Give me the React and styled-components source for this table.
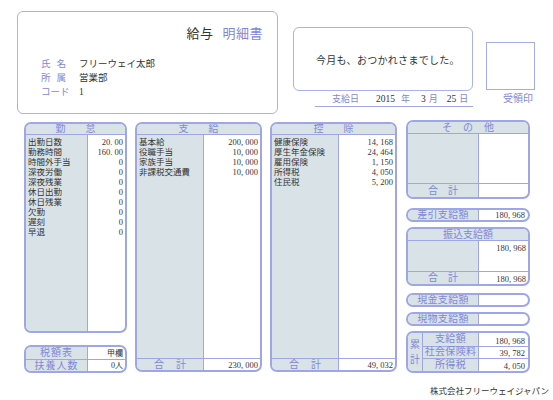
import styled, { createGlobalStyle } from "styled-components";

const line = "#9ea6e6";
const shade = "#d8e2e7";
const blue = "#7f87d8";
const ink = "#333333";
const num = "#3d3333";

const GlobalStyle = createGlobalStyle`
  html, body {
    margin: 0;
    padding: 0;
    background: #ffffff;
  }
  body {
    font-family: "Liberation Serif", "Noto Sans CJK JP", serif;
    color: ${ink};
  }
`;

const Page = styled.div`
  width: 553px;
  height: 400px;
  overflow: hidden;
  box-sizing: border-box;
`;

const Top = styled.div`
  display: flex;
  align-items: flex-start;
  height: 114px;
  padding: 11px 0 0 17px;
  box-sizing: border-box;
`;

const HeadCard = styled.div`
  width: 261px;
  height: 103px;
  box-sizing: border-box;
  border: 1px solid #aab1ec;
  border-radius: 6px;
  padding: 14px 14px 0 23px;
  display: flex;
  flex-direction: column;
`;

const Title = styled.div`
  align-self: flex-end;
  font-size: 13px;
  line-height: 16px;
  letter-spacing: 0.5px;
`;

const TitleDark = styled.span`
  color: ${ink};
  margin-right: 9px;
`;

const TitleBlue = styled.span`
  color: ${blue};
`;

const InfoList = styled.div`
  margin-top: 15px;
  display: flex;
  flex-direction: column;
`;

const InfoRow = styled.div`
  display: flex;
  font-size: 9.5px;
  line-height: 14px;
`;

const InfoLabel = styled.span`
  width: 38px;
  color: ${blue};
  letter-spacing: ${(p) => p.$spread || 0}px;
`;

const InfoValue = styled.span`
  color: ${ink};
`;

const MessageCol = styled.div`
  margin-left: 15px;
  margin-top: 16px;
  display: flex;
  flex-direction: column;
`;

const MessageBox = styled.div`
  width: 180px;
  height: 64px;
  box-sizing: border-box;
  border: 1px solid #aab1ec;
  border-radius: 6px;
  display: flex;
  align-items: center;
  padding-left: 22px;
  font-size: 10px;
  letter-spacing: 0.3px;
  color: ${ink};
`;

const DateRow = styled.div`
  margin-left: 22px;
  width: 158px;
  height: 16px;
  box-sizing: border-box;
  border-bottom: 1px solid ${line};
  display: flex;
  align-items: center;
  padding-left: 17px;
  font-size: 9px;
  line-height: 12px;
  white-space: nowrap;
`;

const DateLabel = styled.span`
  flex: none;
  color: ${blue};
  margin-right: ${(p) => p.$gap || 0}px;
`;

const DateNum = styled.span`
  flex: none;
  color: ${ink};
  font-size: 9.5px;
  margin-right: ${(p) => p.$gap || 0}px;
`;

const StampCol = styled.div`
  margin-left: 13px;
  margin-top: 31px;
  display: flex;
  flex-direction: column;
  align-items: flex-end;
`;

const Stamp = styled.div`
  width: 49px;
  height: 48px;
  box-sizing: border-box;
  border: 1px solid #a4acea;
`;

const StampLabel = styled.div`
  margin-top: 2px;
  margin-right: 2px;
  font-size: 10px;
  line-height: 14px;
  color: ${blue};
`;

const Main = styled.div`
  display: flex;
  align-items: flex-start;
  gap: 8px;
  padding-left: 24px;
  margin-top: 6px;
`;

const Column = styled.div`
  width: ${(p) => p.$w}px;
  margin-top: ${(p) => p.$top || 0}px;
  margin-left: ${(p) => p.$left || 0}px;
  display: flex;
  flex-direction: column;
`;

const Panel = styled.div`
  width: ${(p) => p.$w}px;
  height: ${(p) => p.$h}px;
  margin-top: ${(p) => p.$top || 0}px;
  box-sizing: border-box;
  border: 2px solid ${line};
  border-radius: 7px;
  overflow: hidden;
  display: flex;
  flex-direction: column;
  background: #ffffff;
`;

const PanelHead = styled.div`
  height: ${(p) => p.$h || 11}px;
  flex: none;
  box-sizing: border-box;
  background: ${shade};
  border-bottom: 1px solid ${line};
  display: flex;
  justify-content: center;
  align-items: center;
  gap: ${(p) => p.$gap}px;
  color: ${blue};
  font-size: 10px;
  line-height: 10px;
`;

const Body = styled.div`
  flex: 1;
  display: grid;
  grid-template-columns: ${(p) => p.$left}px 1fr;
  min-height: 0;
`;

const LabelCol = styled.div`
  background: ${shade};
  border-right: 1px solid ${line};
  padding: 2px 0 0 2px;
  font-size: 8.5px;
  line-height: 10px;
  color: ${ink};
  white-space: nowrap;
`;

const ValueCol = styled.div`
  padding: 2px 2px 0 0;
  text-align: right;
  font-size: 8.5px;
  line-height: 10px;
  color: ${num};
`;

const Foot = styled.div`
  height: ${(p) => p.$h || 12}px;
  flex: none;
  box-sizing: border-box;
  border-top: 1px solid ${line};
  display: grid;
  grid-template-columns: ${(p) => p.$left}px 1fr;
`;

const FootLabel = styled.div`
  background: ${shade};
  border-right: 1px solid ${line};
  display: flex;
  justify-content: center;
  align-items: center;
  gap: ${(p) => p.$gap || 12}px;
  color: ${blue};
  font-size: 10px;
  line-height: 10px;
`;

const FootValue = styled.div`
  display: flex;
  justify-content: flex-end;
  align-items: flex-end;
  padding: 0 2px 0 0;
  font-size: 8.5px;
  line-height: 10px;
  color: ${num};
`;

const Pill = styled.div`
  height: ${(p) => p.$h || 14}px;
  margin-top: ${(p) => p.$top || 0}px;
  box-sizing: border-box;
  border: 2px solid ${line};
  border-radius: 7px;
  overflow: hidden;
  display: grid;
  grid-template-columns: 71px 1fr;
`;

const PillLabel = styled.div`
  background: ${shade};
  border-right: 1px solid ${line};
  display: flex;
  justify-content: center;
  align-items: center;
  color: ${blue};
  font-size: 10px;
  line-height: 10px;
  letter-spacing: 0.3px;
`;

const PillValue = styled.div`
  display: flex;
  justify-content: flex-end;
  align-items: flex-end;
  padding-right: 3px;
  font-size: 8.5px;
  line-height: 9px;
  color: ${num};
`;

const TaxBox = styled.div`
  margin-top: 12px;
  height: 28px;
  box-sizing: border-box;
  border: 2px solid ${line};
  border-radius: 7px;
  overflow: hidden;
  display: grid;
  grid-template-columns: 62px 1fr;
  grid-template-rows: 1fr 1fr;
`;

const TaxLabel = styled.div`
  background: ${shade};
  border-right: 1px solid ${line};
  border-top: ${(p) => (p.$first ? "none" : `1px solid ${line}`)};
  display: flex;
  justify-content: center;
  align-items: center;
  color: ${blue};
  font-size: 10px;
  line-height: 10px;
  letter-spacing: 1px;
`;

const TaxValue = styled.div`
  border-top: ${(p) => (p.$first ? "none" : `1px solid ${line}`)};
  display: flex;
  justify-content: flex-end;
  align-items: center;
  padding-right: 2px;
  font-size: 8px;
  line-height: 9px;
  color: ${ink};
`;

const Ruikei = styled.div`
  margin-top: 5px;
  height: 42px;
  box-sizing: border-box;
  border: 2px solid ${line};
  border-radius: 7px;
  overflow: hidden;
  display: grid;
  grid-template-columns: 15px 56px 1fr;
  grid-template-rows: 1fr 1fr 1fr;
`;

const RuikeiSide = styled.div`
  grid-row: 1 / 4;
  background: ${shade};
  border-right: 1px solid ${line};
  display: flex;
  flex-direction: column;
  justify-content: center;
  align-items: center;
  color: ${blue};
  font-size: 10px;
  line-height: 15px;
`;

const RuikeiLabel = styled.div`
  background: ${shade};
  border-right: 1px solid ${line};
  border-top: ${(p) => (p.$first ? "none" : `1px solid ${line}`)};
  display: flex;
  justify-content: center;
  align-items: center;
  color: ${blue};
  font-size: 10px;
  line-height: 10px;
  letter-spacing: 0.3px;
`;

const RuikeiValue = styled.div`
  border-top: ${(p) => (p.$first ? "none" : `1px solid ${line}`)};
  display: flex;
  justify-content: flex-end;
  align-items: flex-end;
  padding-right: 3px;
  font-size: 8.5px;
  line-height: 10px;
  color: ${num};
`;

const Company = styled.div`
  margin-top: 12px;
  padding-right: 4px;
  text-align: right;
  font-size: 8.5px;
  line-height: 12px;
  color: ${ink};
`;

const Spread = ({ text }) => text.split("").map((c, i) => <span key={i}>{c}</span>);

const attendance = [
  ["出勤日数", "20. 00"],
  ["勤務時間", "160. 00"],
  ["時間外手当", "0"],
  ["深夜労働", "0"],
  ["深夜残業", "0"],
  ["休日出勤", "0"],
  ["休日残業", "0"],
  ["欠勤", "0"],
  ["遅刻", "0"],
  ["早退", "0"],
];

const payments = [
  ["基本給", "200, 000"],
  ["役職手当", "10, 000"],
  ["家族手当", "10, 000"],
  ["非課税交通費", "10, 000"],
];

const deductions = [
  ["健康保険", "14, 168"],
  ["厚生年金保険", "24, 464"],
  ["雇用保険", "1, 150"],
  ["所得税", "4, 050"],
  ["住民税", "5, 200"],
];

const ruikei = [
  ["支給額", "180, 968"],
  ["社会保険料", "39, 782"],
  ["所得税", "4, 050"],
];

const ListPanel = ({ title, gap, w, h, left, rows, total }) => (
  <Panel $w={w} $h={h} $top={2}>
    <PanelHead $gap={gap}>
      <Spread text={title} />
    </PanelHead>
    <Body $left={left}>
      <LabelCol>
        {rows.map(([label]) => (
          <div key={label}>{label}</div>
        ))}
      </LabelCol>
      <ValueCol>
        {rows.map(([label, value]) => (
          <div key={label}>{value}</div>
        ))}
      </ValueCol>
    </Body>
    {total !== undefined && (
      <Foot $left={left}>
        <FootLabel $gap={12}>
          <Spread text="合計" />
        </FootLabel>
        <FootValue>{total}</FootValue>
      </Foot>
    )}
  </Panel>
);

const App = () => (
  <>
    <GlobalStyle />
    <Page>
      <Top>
        <HeadCard>
          <Title>
            <TitleDark>給与</TitleDark>
            <TitleBlue>明細書</TitleBlue>
          </Title>
          <InfoList>
            <InfoRow>
              <InfoLabel $spread={6}>氏名</InfoLabel>
              <InfoValue>フリーウェイ太郎</InfoValue>
            </InfoRow>
            <InfoRow>
              <InfoLabel $spread={6}>所属</InfoLabel>
              <InfoValue>営業部</InfoValue>
            </InfoRow>
            <InfoRow>
              <InfoLabel>コード</InfoLabel>
              <InfoValue>1</InfoValue>
            </InfoRow>
          </InfoList>
        </HeadCard>
        <MessageCol>
          <MessageBox>今月も、おつかれさまでした。</MessageBox>
          <DateRow>
            <DateLabel $gap={17}>支給日</DateLabel>
            <DateNum $gap={6}>2015</DateNum>
            <DateLabel $gap={11}>年</DateLabel>
            <DateNum $gap={3}>3</DateNum>
            <DateLabel $gap={9}>月</DateLabel>
            <DateNum $gap={3}>25</DateNum>
            <DateLabel>日</DateLabel>
          </DateRow>
        </MessageCol>
        <StampCol>
          <Stamp />
          <StampLabel>受領印</StampLabel>
        </StampCol>
      </Top>

      <Main>
        <Column $w={103}>
          <ListPanel title="勤怠" gap={20} w={103} h={211} left={62} rows={attendance} />
          <TaxBox>
            <TaxLabel $first>税額表</TaxLabel>
            <TaxValue $first>甲欄</TaxValue>
            <TaxLabel>扶養人数</TaxLabel>
            <TaxValue>0人</TaxValue>
          </TaxBox>
        </Column>
        <ListPanel title="支給" gap={20} w={127} h={250} left={67} rows={payments} total="230, 000" />
        <ListPanel title="控除" gap={20} w={127} h={250} left={67} rows={deductions} total="49, 032" />
        <Column $w={124} $left={1}>
          <Panel $w={124} $h={79}>
            <PanelHead $gap={11} $h={12}>
              <Spread text="その他" />
            </PanelHead>
            <Body $left={71}>
              <LabelCol />
              <ValueCol />
            </Body>
            <Foot $left={71} $h={14}>
              <FootLabel $gap={10}>
                <Spread text="合計" />
              </FootLabel>
              <FootValue />
            </Foot>
          </Panel>
          <Pill $top={9}>
            <PillLabel>差引支給額</PillLabel>
            <PillValue>180, 968</PillValue>
          </Pill>
          <Panel $w={124} $h={59} $top={5}>
            <PanelHead $gap={0} $h={12}>
              振込支給額
            </PanelHead>
            <Body $left={71}>
              <LabelCol />
              <ValueCol>180, 968</ValueCol>
            </Body>
            <Foot $left={71} $h={13}>
              <FootLabel $gap={10}>
                <Spread text="合計" />
              </FootLabel>
              <FootValue>180, 968</FootValue>
            </Foot>
          </Panel>
          <Pill $top={7}>
            <PillLabel>現金支給額</PillLabel>
            <PillValue />
          </Pill>
          <Pill $top={5}>
            <PillLabel>現物支給額</PillLabel>
            <PillValue />
          </Pill>
          <Ruikei>
            <RuikeiSide>
              <span>累</span>
              <span>計</span>
            </RuikeiSide>
            {ruikei.map(([label, value], i) => [
              <RuikeiLabel key={label} $first={i === 0}>
                {label}
              </RuikeiLabel>,
              <RuikeiValue key={label + "v"} $first={i === 0}>
                {value}
              </RuikeiValue>,
            ])}
          </Ruikei>
        </Column>
      </Main>
      <Company>株式会社フリーウェイジャパン</Company>
    </Page>
  </>
);

export default App;
